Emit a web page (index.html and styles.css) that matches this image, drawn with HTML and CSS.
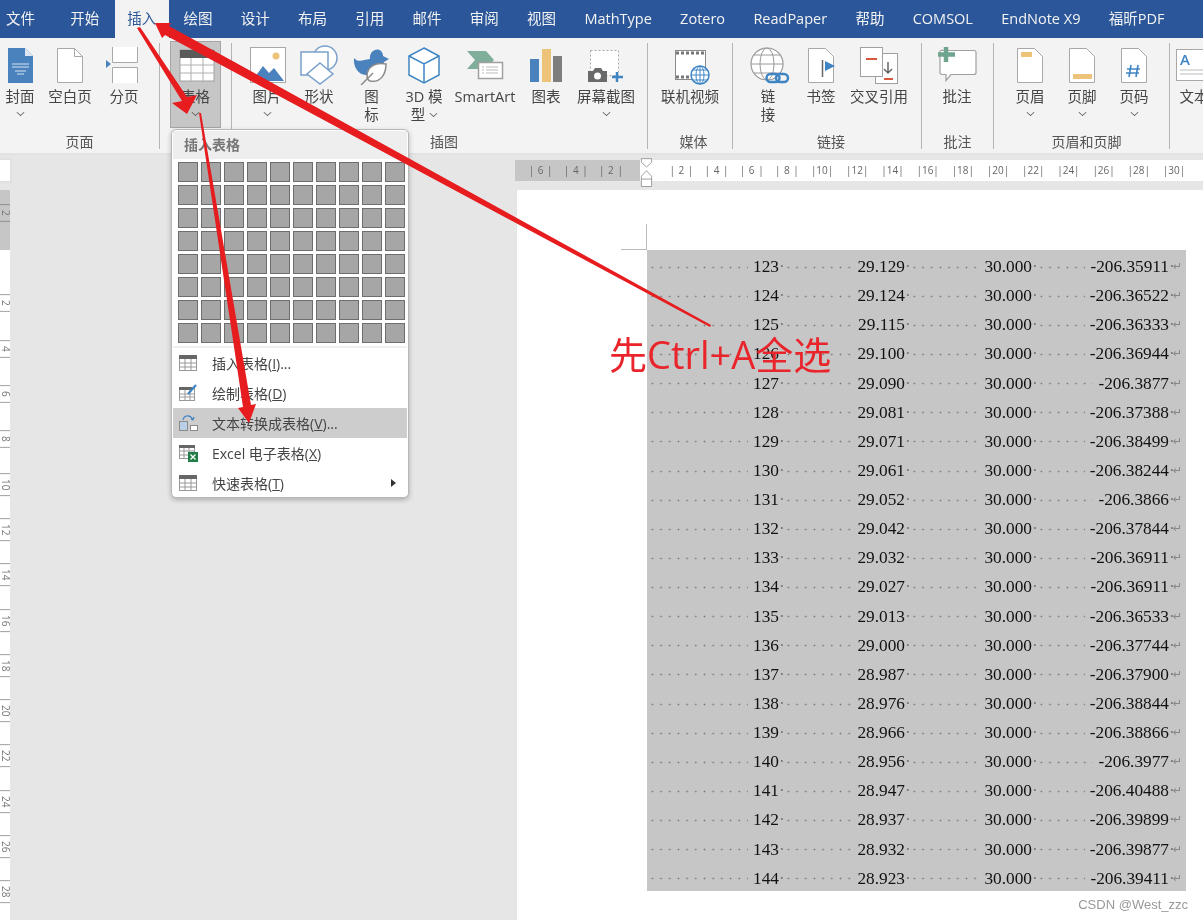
FILE: index.html
```html
<!DOCTYPE html>
<html lang="zh-CN">

<head>
    <meta charset="UTF-8">
    <title>Word 插入表格</title>
    <link rel="stylesheet" href="styles.css">
</head>

<body>
    <div class="app">
        <nav class="tabs">
            <span class="tab tab-file">文件</span>
            <span class="tab tab-home">开始</span>
            <span class="tab tab-active">插入</span>
            <span class="tab">绘图</span>
            <span class="tab">设计</span>
            <span class="tab">布局</span>
            <span class="tab">引用</span>
            <span class="tab">邮件</span>
            <span class="tab">审阅</span>
            <span class="tab">视图</span>
            <span class="tab">MathType</span>
            <span class="tab">Zotero</span>
            <span class="tab">ReadPaper</span>
            <span class="tab">帮助</span>
            <span class="tab">COMSOL</span>
            <span class="tab">EndNote X9</span>
            <span class="tab">福昕PDF</span>
        </nav>

        <section class="ribbon">
            <div class="group group-pages">
                <div class="items">
                    <div class="btn w40">
                        <svg class="icon" viewBox="0 0 44 40"><path d="M10 3h17l8 8v27H10z" fill="#4a82bd"/><path d="M27 3v8h8z" fill="#dce7f3"/><path d="M14 19h17M14 22h17M17 26h11M19 29h7" stroke="#d5e3f1" fill="none"/></svg>
                        <span class="label">封面</span><span class="chev"></span>
                    </div>
                    <div class="btn w60">
                        <svg class="icon" viewBox="0 0 44 40"><path d="M9.5 3.5h17l8 8v26h-25z" fill="#fff" stroke="#a8a8a8"/><path d="M26.500 3.500v8h8" fill="none" stroke="#a8a8a8"/></svg>
                        <span class="label">空白页</span>
                    </div>
                    <div class="btn w48">
                        <svg class="icon" viewBox="0 0 44 40"><path d="M10.500 2v15.500h25V2M10.500 38V22.500h25V38" fill="#fff" stroke="#a8a8a8"/><path d="M4 15l5 4-5 4z" fill="#4a82bd"/></svg>
                        <span class="label">分页</span>
                    </div>
                </div>
                <div class="group-title">页面</div>
            </div>

            <div class="group group-table">
                <div class="table-btn">
                    <svg class="icon" viewBox="0 0 44 40"><rect x="6" y="5" width="34" height="31" fill="#fff" stroke="#a0a0a0"/><rect x="6" y="5" width="34" height="8" fill="#5a5a5a"/><path d="M6 20h34M6 28h34M17 13v23M29 13v23" stroke="#b0b0b0" fill="none"/></svg>
                    <span class="label">表格</span><span class="chev"></span>
                </div>
            </div>

            <div class="group group-illus">
                <div class="items">
                    <div class="btn w52">
                        <svg class="icon" viewBox="0 0 44 40"><rect x="5.500" y="2.500" width="35" height="35" fill="#fff" stroke="#a8a8a8"/><circle cx="31" cy="11" r="3.500" fill="#edc37a"/><path d="M7 36l11-15 6 7 5-5 10 13z" fill="#4a82bd"/></svg>
                        <span class="label">图片</span><span class="chev"></span>
                    </div>
                    <div class="btn w52">
                        <svg class="icon" viewBox="0 0 44 40"><circle cx="28" cy="13" r="12" fill="#fff" stroke="#7ba0c9" stroke-width="1.500"/><rect x="4" y="7" width="27" height="23" fill="#fff" stroke="#7ba0c9" stroke-width="1.500"/><path d="M23 18l13 11-13 10-13-10z" fill="#fff" stroke="#7ba0c9" stroke-width="1.500"/></svg>
                        <span class="label">形状</span>
                    </div>
                    <div class="btn w53">
                        <svg class="icon" viewBox="0 0 44 40"><path d="M4 13c4 5 9 2 16 1-1-8 7-12 11-8 2 2 2 4 2 5l6 3-5 3c-2 9-9 13-18 13-8 0-13-9-12-17z" fill="#4a82bd"/><path d="M36 19c-11-2-19 3-19 12 0 2 1 4 3 5 10 2 16-6 16-17z" fill="#fff" stroke="#8a8a8a" stroke-width="1.500"/><path d="M11 40l12-12" stroke="#8a8a8a" stroke-width="1.500" fill="none"/></svg>
                        <span class="label">图<br>标</span>
                    </div>
                    <div class="btn w52">
                        <svg class="icon" viewBox="0 0 44 40"><path d="M22 3l15 8v19l-15 8-15-8V11z" fill="#fff" stroke="#3f85c4" stroke-width="1.500"/><path d="M7 11l15 8 15-8M22 19v19" fill="none" stroke="#3f85c4" stroke-width="1.500"/></svg>
                        <span class="label">3D 模<br>型<span class="chev chev-inline"></span></span>
                    </div>
                    <div class="btn w70">
                        <svg class="icon" viewBox="0 0 44 40"><path d="M4 6h19l8 9-8 9H4l8-9z" fill="#7fae9a"/><rect x="15.500" y="17.500" width="24" height="16" fill="#fff" stroke="#a0a0a0" stroke-width="1.500"/><path d="M19 22h2M23 22h12M19 25h2M23 25h12M19 28h2M23 28h12" stroke="#bbb" fill="none"/></svg>
                        <span class="label">SmartArt</span>
                    </div>
                    <div class="btn w52">
                        <svg class="icon" viewBox="0 0 44 40"><rect x="6" y="14" width="9" height="23" fill="#4a82bd"/><rect x="18" y="4" width="9" height="33" fill="#edc37a"/><rect x="29" y="11" width="9" height="26" fill="#7d7d7d"/></svg>
                        <span class="label">图表</span>
                    </div>
                    <div class="btn w68">
                        <svg class="icon" viewBox="0 0 44 40"><rect x="6.500" y="5.500" width="28" height="25" fill="#fff" stroke="#a8a8a8" stroke-dasharray="2 2"/><path d="M4 26h5l2-3h6l2 3h4v11H4z" fill="#6a6a6a"/><circle cx="13.500" cy="31" r="3.500" fill="#fff"/><path d="M33 27v10M28 32h11" stroke="#3f85c4" stroke-width="2.500" fill="none"/></svg>
                        <span class="label">屏幕截图</span><span class="chev"></span>
                    </div>
                </div>
                <div class="group-title">插图</div>
            </div>

            <div class="group group-media">
                <div class="items">
                    <div class="btn w70">
                        <svg class="icon" viewBox="0 0 44 40"><rect x="7.500" y="5.500" width="30" height="29" fill="#fff" stroke="#8a8a8a"/><path d="M8 8h29M8 32h29" stroke="#777" stroke-width="3" stroke-dasharray="3 2" fill="none"/><circle cx="32" cy="30" r="9" fill="#fff" stroke="#3f85c4" stroke-width="1.500"/><path d="M23 30h18M32 21v18M25 25h14M25 35h14" stroke="#3f85c4" fill="none"/><ellipse cx="32" cy="30" rx="4" ry="9" fill="none" stroke="#3f85c4"/></svg>
                        <span class="label">联机视频</span>
                    </div>
                </div>
                <div class="group-title">媒体</div>
            </div>

            <div class="group group-links">
                <div class="items">
                    <div class="btn w54">
                        <svg class="icon" viewBox="0 0 44 40"><circle cx="21" cy="19" r="16" fill="#fff" stroke="#9a9a9a" stroke-width="1.200"/><ellipse cx="21" cy="19" rx="7" ry="16" fill="none" stroke="#9a9a9a"/><path d="M5 19h32M8 10h26M8 28h26" stroke="#9a9a9a" fill="none"/><rect x="20.500" y="29" width="13" height="8" rx="4" fill="none" stroke="#3f85c4" stroke-width="2.500"/><rect x="30" y="29" width="12" height="8" rx="4" fill="none" stroke="#3f85c4" stroke-width="2.500"/></svg>
                        <span class="label">链<br>接</span>
                    </div>
                    <div class="btn w52">
                        <svg class="icon" viewBox="0 0 44 40"><path d="M9.500 3.500h17l8 8v26h-25z" fill="#fff" stroke="#a8a8a8"/><path d="M23.500 15v17" stroke="#666" stroke-width="1.500" fill="none"/><path d="M26 16l10 5-10 5z" fill="#3f85c4"/></svg>
                        <span class="label">书签</span>
                    </div>
                    <div class="btn w64">
                        <svg class="icon" viewBox="0 0 44 40"><rect x="18.500" y="8.500" width="22" height="30" fill="#fff" stroke="#a0a0a0"/><rect x="3.500" y="2.500" width="22" height="29" fill="#fff" stroke="#a0a0a0"/><path d="M9 14h11M27 34h9" stroke="#d9573a" stroke-width="2" fill="none"/><path d="M31 17v10M27 24l4 4 4-4" stroke="#666" stroke-width="1.500" fill="none"/></svg>
                        <span class="label">交叉引用</span>
                    </div>
                </div>
                <div class="group-title">链接</div>
            </div>

            <div class="group group-notes">
                <div class="items">
                    <div class="btn w70">
                        <svg class="icon" viewBox="0 0 44 40"><path d="M8 5.500h31a2 2 0 0 1 2 2v20a2 2 0 0 1-2 2H16l-5 6v-6H7a2 2 0 0 1-2-2V7.500a2 2 0 0 1 3-2z" fill="#fff" stroke="#a0a0a0" stroke-width="1.200"/><path d="M11 2v15M3 9.500h17" stroke="#6fa58e" stroke-width="4.500" fill="none"/></svg>
                        <span class="label">批注</span>
                    </div>
                </div>
                <div class="group-title">批注</div>
            </div>

            <div class="group group-header">
                <div class="items">
                    <div class="btn w52">
                        <svg class="icon" viewBox="0 0 44 40"><path d="M9.500 3.500h17l8 8v26h-25z" fill="#fff" stroke="#a8a8a8"/><rect x="13" y="7" width="11" height="5" fill="#edc37a"/></svg>
                        <span class="label">页眉</span><span class="chev"></span>
                    </div>
                    <div class="btn w52">
                        <svg class="icon" viewBox="0 0 44 40"><path d="M9.500 3.500h17l8 8v26h-25z" fill="#fff" stroke="#a8a8a8"/><rect x="13" y="29" width="19" height="5" fill="#edc37a"/></svg>
                        <span class="label">页脚</span><span class="chev"></span>
                    </div>
                    <div class="btn w52">
                        <svg class="icon" viewBox="0 0 44 40"><path d="M9.500 3.500h17l8 8v26h-25z" fill="#fff" stroke="#a8a8a8"/><path d="M19 20l-2 12M26 20l-2 12M15 24h13M14 28h13" stroke="#3f85c4" stroke-width="1.600" fill="none"/></svg>
                        <span class="label">页码</span><span class="chev"></span>
                    </div>
                </div>
                <div class="group-title">页眉和页脚</div>
            </div>

            <div class="group group-text">
                <div class="items">
                    <div class="btn w46">
                        <svg class="icon" viewBox="0 0 44 40"><rect x="4.500" y="4.500" width="36" height="31" fill="#fff" stroke="#a8a8a8"/><text class="icon-a" x="8" y="20">A</text><path d="M8 25h26M8 29h26" stroke="#bbb" fill="none"/></svg>
                        <span class="label">文本</span>
                    </div>
                </div>
            </div>
        </section>

        <main class="workspace">
            <aside class="side">
                <div class="corner"></div>
                <div class="vruler">
                    <span>| 2 |</span><span></span><span>| 2 |</span><span>| 4 |</span><span>| 6 |</span><span>| 8 |</span><span>| 10 |</span><span>| 12 |</span><span>| 14 |</span><span>| 16 |</span><span>| 18 |</span><span>| 20 |</span><span>| 22 |</span><span>| 24 |</span><span>| 26 |</span><span>| 28 |</span>
                </div>
            </aside>
            <div class="doc">
                <div class="hruler">
                    <span>| 6 |</span><span>| 4 |</span><span>| 2 |</span><span></span><span>| 2 |</span><span>| 4 |</span><span>| 6 |</span><span>| 8 |</span><span>|10|</span><span>|12|</span><span>|14|</span><span>|16|</span><span>|18|</span><span>|20|</span><span>|22|</span><span>|24|</span><span>|26|</span><span>|28|</span><span>|30|</span><span>|3</span>
                </div>
                <div class="page">
                    <div class="data">
                        <div class="row"><span>123</span><span>29.129</span><span>30.000</span><span>-206.35911</span></div>
                        <div class="row"><span>124</span><span>29.124</span><span>30.000</span><span>-206.36522</span></div>
                        <div class="row"><span>125</span><span>29.115</span><span>30.000</span><span>-206.36333</span></div>
                        <div class="row"><span>126</span><span>29.100</span><span>30.000</span><span>-206.36944</span></div>
                        <div class="row"><span>127</span><span>29.090</span><span>30.000</span><span>-206.3877</span></div>
                        <div class="row"><span>128</span><span>29.081</span><span>30.000</span><span>-206.37388</span></div>
                        <div class="row"><span>129</span><span>29.071</span><span>30.000</span><span>-206.38499</span></div>
                        <div class="row"><span>130</span><span>29.061</span><span>30.000</span><span>-206.38244</span></div>
                        <div class="row"><span>131</span><span>29.052</span><span>30.000</span><span>-206.3866</span></div>
                        <div class="row"><span>132</span><span>29.042</span><span>30.000</span><span>-206.37844</span></div>
                        <div class="row"><span>133</span><span>29.032</span><span>30.000</span><span>-206.36911</span></div>
                        <div class="row"><span>134</span><span>29.027</span><span>30.000</span><span>-206.36911</span></div>
                        <div class="row"><span>135</span><span>29.013</span><span>30.000</span><span>-206.36533</span></div>
                        <div class="row"><span>136</span><span>29.000</span><span>30.000</span><span>-206.37744</span></div>
                        <div class="row"><span>137</span><span>28.987</span><span>30.000</span><span>-206.37900</span></div>
                        <div class="row"><span>138</span><span>28.976</span><span>30.000</span><span>-206.38844</span></div>
                        <div class="row"><span>139</span><span>28.966</span><span>30.000</span><span>-206.38866</span></div>
                        <div class="row"><span>140</span><span>28.956</span><span>30.000</span><span>-206.3977</span></div>
                        <div class="row"><span>141</span><span>28.947</span><span>30.000</span><span>-206.40488</span></div>
                        <div class="row"><span>142</span><span>28.937</span><span>30.000</span><span>-206.39899</span></div>
                        <div class="row"><span>143</span><span>28.932</span><span>30.000</span><span>-206.39877</span></div>
                        <div class="row"><span>144</span><span>28.923</span><span>30.000</span><span>-206.39411</span></div>
                    </div>
                </div>
            </div>
        </main>

        <div class="menu">
            <div class="menu-title">插入表格</div>
            <div class="picker">
                <i></i><i></i><i></i><i></i><i></i><i></i><i></i><i></i><i></i><i></i>
                <i></i><i></i><i></i><i></i><i></i><i></i><i></i><i></i><i></i><i></i>
                <i></i><i></i><i></i><i></i><i></i><i></i><i></i><i></i><i></i><i></i>
                <i></i><i></i><i></i><i></i><i></i><i></i><i></i><i></i><i></i><i></i>
                <i></i><i></i><i></i><i></i><i></i><i></i><i></i><i></i><i></i><i></i>
                <i></i><i></i><i></i><i></i><i></i><i></i><i></i><i></i><i></i><i></i>
                <i></i><i></i><i></i><i></i><i></i><i></i><i></i><i></i><i></i><i></i>
                <i></i><i></i><i></i><i></i><i></i><i></i><i></i><i></i><i></i><i></i>
            </div>
            <div class="menu-item">
                <svg class="menu-icon" viewBox="0 0 20 18"><rect x="1.500" y="1.500" width="17" height="15" fill="#fff" stroke="#999"/><rect x="1" y="1" width="18" height="4" fill="#666"/><path d="M2 9h16M2 13h16M7 5v11M13 5v11" stroke="#999" fill="none"/></svg>
                <span>插入表格(<u>I</u>)...</span>
            </div>
            <div class="menu-item">
                <svg class="menu-icon" viewBox="0 0 20 18"><rect x="1.500" y="3.500" width="15" height="13" fill="#fff" stroke="#999"/><rect x="1" y="3" width="13" height="3" fill="#666"/><path d="M2 10h14M2 13h14M7 6v10M12 6v10" stroke="#999" fill="none"/><path d="M10 10l8-9" stroke="#3f85c4" stroke-width="2.200" fill="none"/></svg>
                <span>绘制表格(<u>D</u>)</span>
            </div>
            <div class="menu-item menu-item-on">
                <svg class="menu-icon" viewBox="0 0 20 18"><rect x="1.500" y="7.500" width="8" height="9" fill="#b9d0e8" stroke="#8a8a8a"/><rect x="12.500" y="11.500" width="7" height="5" fill="#fff" stroke="#8a8a8a"/><path d="M5 6c1-5 7-6 10 0M15 6l-2-1M15 6l1-3" stroke="#3f85c4" stroke-width="1.200" fill="none"/></svg>
                <span>文本转换成表格(<u>V</u>)...</span>
            </div>
            <div class="menu-item">
                <svg class="menu-icon" viewBox="0 0 20 18"><rect x="1.500" y="1.500" width="15" height="13" fill="#fff" stroke="#999"/><rect x="1" y="1" width="16" height="3" fill="#666"/><path d="M2 7h14M2 11h14M6 4v10M11 4v10" stroke="#999" fill="none"/><rect x="10" y="8" width="10" height="10" fill="#1e7e45"/><path d="M12.500 10.500l5 5M17.500 10.500l-5 5" stroke="#fff" stroke-width="1.300" fill="none"/></svg>
                <span>Excel 电子表格(<u>X</u>)</span>
            </div>
            <div class="menu-item">
                <svg class="menu-icon" viewBox="0 0 20 18"><rect x="1.500" y="1.500" width="17" height="15" fill="#fff" stroke="#999"/><rect x="1" y="1" width="18" height="4" fill="#666"/><path d="M2 9h16M2 13h16M7 5v11M13 5v11" stroke="#999" fill="none"/></svg>
                <span>快速表格(<u>T</u>)</span>
                <span class="submenu"></span>
            </div>
        </div>

        <svg class="marker" viewBox="0 0 14 34"><path d="M1.500 1h11v4l-5.500 5-5.500-5z" fill="#fff" stroke="#999"/><path d="M7 14l5.500 6v11h-11V20z" fill="#fff" stroke="#999"/><path d="M1.500 23h11" stroke="#999" fill="none"/></svg>

        <svg class="arrows" viewBox="0 0 1203 920">
            <polygon points="155,23 171,23 169,26 711,325 710,327 165,35 162,38"/>
            <polygon points="137,28 140,27 187,97 197,95 187,114 172,103 182,101"/>
            <polygon points="199,113 201,113 251,405 256,404 249,423 238,408 243,407"/>
        </svg>
        <div class="callout">先Ctrl+A全选</div>
        <div class="mark">CSDN @West_zzc</div>
    </div>
</body>
</html>
```

FILE: styles.css
```css
* {
    box-sizing: border-box;
}

body {
    margin: 0;
    overflow: hidden;
    background: #e6e6e6;
    font-family: "Open Sans", "Noto Sans CJK SC", sans-serif;
    font-size: 14.5px;
    color: #444;
}

.app {
    position: relative;
    display: flex;
    flex-direction: column;
    width: 1203px;
    height: 920px;
    overflow: hidden;
    filter: blur(0.35px);
}

/* tab strip */
.tabs {
    display: flex;
    flex: none;
    height: 38px;
    background: #2b579a;
    color: #f3f3f3;
    line-height: 38px;
    white-space: nowrap;
}

.tab {
    padding: 0 14.15px;
}

.tab-file {
    padding: 0 14px 0 6px;
}

.tab-home {
    margin-left: 7px;
}

.tab-active {
    margin-left: 2px;
    padding: 0 13px 0 12px;
    background: #f3f3f3;
    color: #2b579a;
}

/* ribbon */
.ribbon {
    display: flex;
    flex: none;
    height: 117px;
    padding-top: 5px;
    background: #f3f3f3;
    border-bottom: 2px solid #e2e2e2;
}

.group {
    display: flex;
    flex: none;
    flex-direction: column;
    height: 106px;
    border-right: 1px solid #b5b5b5;
}

.group-pages { width: 160px; }
.group-table { width: 72px; padding-left: 10px; }
.group-illus { width: 416px; padding-left: 9px; }
.group-media { width: 85px; padding-left: 7px; }
.group-links { width: 189px; padding-left: 8px; }
.group-notes { width: 72px; }
.group-header { width: 176px; padding-left: 10px; }
.group-text { border-right: 0; padding-left: 1px; }

.items {
    display: flex;
    flex: none;
    padding-top: 2px;
}

.group-title {
    margin-top: auto;
    height: 16px;
    line-height: 18px;
    text-align: center;
    font-size: 14px;
    color: #555;
}

.btn,
.table-btn {
    display: flex;
    flex: none;
    flex-direction: column;
    align-items: center;
    text-align: center;
    line-height: 18px;
    white-space: nowrap;
}

.table-btn {
    width: 51px;
    height: 87px;
    margin-top: -2px;
    padding-top: 3px;
    background: #c6c6c6;
    border: 1px solid #a6a6a6;
}

.w40 { width: 40px; }
.w46 { width: 46px; }
.w48 { width: 48px; }
.w52 { width: 52px; }
.w53 { width: 53px; }
.w54 { width: 54px; }
.w60 { width: 60px; }
.w64 { width: 64px; }
.w68 { width: 68px; }
.w70 { width: 70px; }

.icon {
    flex: none;
    width: 44px;
    height: 40px;
    margin-bottom: 3px;
}

.icon-a {
    font-family: "Open Sans", sans-serif;
    font-size: 15px;
    font-weight: 600;
    fill: #3f85c4;
}

.chev {
    display: block;
    width: 7px;
    height: 7px;
    margin-top: 3px;
    border-right: 1.500px solid #555;
    border-bottom: 1.500px solid #555;
    transform: scale(0.8, 0.7) rotate(45deg);
}

.chev-inline {
    display: inline-block;
    margin: 0 0 3px 5px;
}

/* document area */
.workspace {
    display: flex;
    flex: 1;
    min-height: 0;
    background: #e6e6e6;
}

.side {
    flex: none;
    width: 515px;
    padding-top: 3px;
}

.corner {
    width: 12px;
    height: 25px;
    background: #fff;
    border: 2px solid #e0e0e0;
    border-left: 0;
}

.vruler {
    display: flex;
    flex-direction: column;
    width: 10px;
    height: 730px;
    margin-top: 7px;
    overflow: hidden;
    background: linear-gradient(to bottom, #c6c6c6 60px, #fff 60px);
}

.vruler span {
    flex: none;
    height: 45.300px;
    writing-mode: vertical-rl;
    text-align: center;
    font-size: 10px;
    line-height: 8px;
    color: #777;
    white-space: nowrap;
}

.doc {
    flex: 1;
    min-width: 0;
    padding-top: 5px;
}

.hruler {
    display: flex;
    height: 21px;
    padding-left: 8px;
    overflow: hidden;
    background: linear-gradient(to right, #c6c6c6 125px, #fff 125px);
    font-size: 10px;
    line-height: 21px;
    color: #666;
    white-space: nowrap;
}

.hruler span {
    flex: none;
    width: 35.200px;
    text-align: center;
    word-spacing: 1px;
}

.page {
    position: relative;
    height: 760px;
    margin: 9px 0 0 2px;
    padding: 60px 17px 0 130px;
    background: #fff;
}

/* crop mark */
.page::before {
    content: "";
    position: absolute;
    left: 104px;
    top: 34px;
    width: 25px;
    height: 25px;
    border-right: 1px solid #bbb;
    border-bottom: 1px solid #bbb;
}

.data {
    height: 641px;
    background: #c6c6c6;
    font-family: "Liberation Serif", serif;
    font-size: 17.300px;
    color: #111;
}

.row {
    display: grid;
    grid-template-columns: 136px 126px 127px 137px 13px;
    height: 29.136px;
    padding-top: 5px;
    line-height: 24px;
}

.row span {
    display: flex;
    white-space: nowrap;
}

.row span::before {
    content: "";
    flex: 1;
    margin: 0 5px 0 1px;
    background: radial-gradient(circle, #777 0.7px, transparent 1.100px) 0 center / 8.700px 8.700px repeat-x;
}

.row span::after {
    content: "·";
    width: 4px;
    color: #777;
}

.row::after {
    content: "↵";
    font-family: "DejaVu Sans", sans-serif;
    font-size: 11px;
    color: #888;
}

/* table dropdown */
.menu {
    position: absolute;
    left: 171px;
    top: 129px;
    width: 238px;
    height: 369px;
    padding: 1px;
    overflow: hidden;
    background: #fff;
    border: 1px solid #b8b8b8;
    border-radius: 5px;
    box-shadow: 0 2px 5px rgba(0, 0, 0, 0.25);
    font-size: 14px;
}

.menu-title {
    height: 28px;
    padding-left: 11px;
    background: #eee;
    line-height: 28px;
    font-weight: 700;
    color: #777;
}

.picker {
    display: grid;
    grid-template-columns: repeat(10, 20px);
    grid-auto-rows: 20px;
    gap: 3px;
    padding: 3px 0 3px 5px;
    border-bottom: 2px solid #f0f0f0;
}

.picker i {
    background: #a6a6a6;
    border: 1.500px solid #6e6e6e;
}

.menu-item {
    display: flex;
    align-items: center;
    height: 30px;
    padding-left: 5px;
    white-space: nowrap;
}

.menu-item-on {
    background: #cdcdcd;
}

.menu-icon {
    flex: none;
    width: 20px;
    height: 18px;
    margin-right: 14px;
}

.submenu {
    margin-left: auto;
    margin-right: 11px;
    border-left: 5px solid #333;
    border-top: 4px solid transparent;
    border-bottom: 4px solid transparent;
}

/* things lying over the page */
.marker {
    position: absolute;
    left: 640px;
    top: 157px;
    width: 13px;
    height: 33px;
}

.arrows {
    position: absolute;
    left: 0;
    top: 0;
    width: 1203px;
    height: 920px;
    fill: #e71c1f;
}

.callout {
    position: absolute;
    left: 609px;
    top: 327px;
    font-size: 38px;
    line-height: 54px;
    color: #e9252b;
    white-space: nowrap;
}

.mark {
    position: absolute;
    right: 15px;
    bottom: 7px;
    font-family: "Liberation Sans", sans-serif;
    font-size: 13px;
    line-height: 16px;
    color: #999;
}
```
